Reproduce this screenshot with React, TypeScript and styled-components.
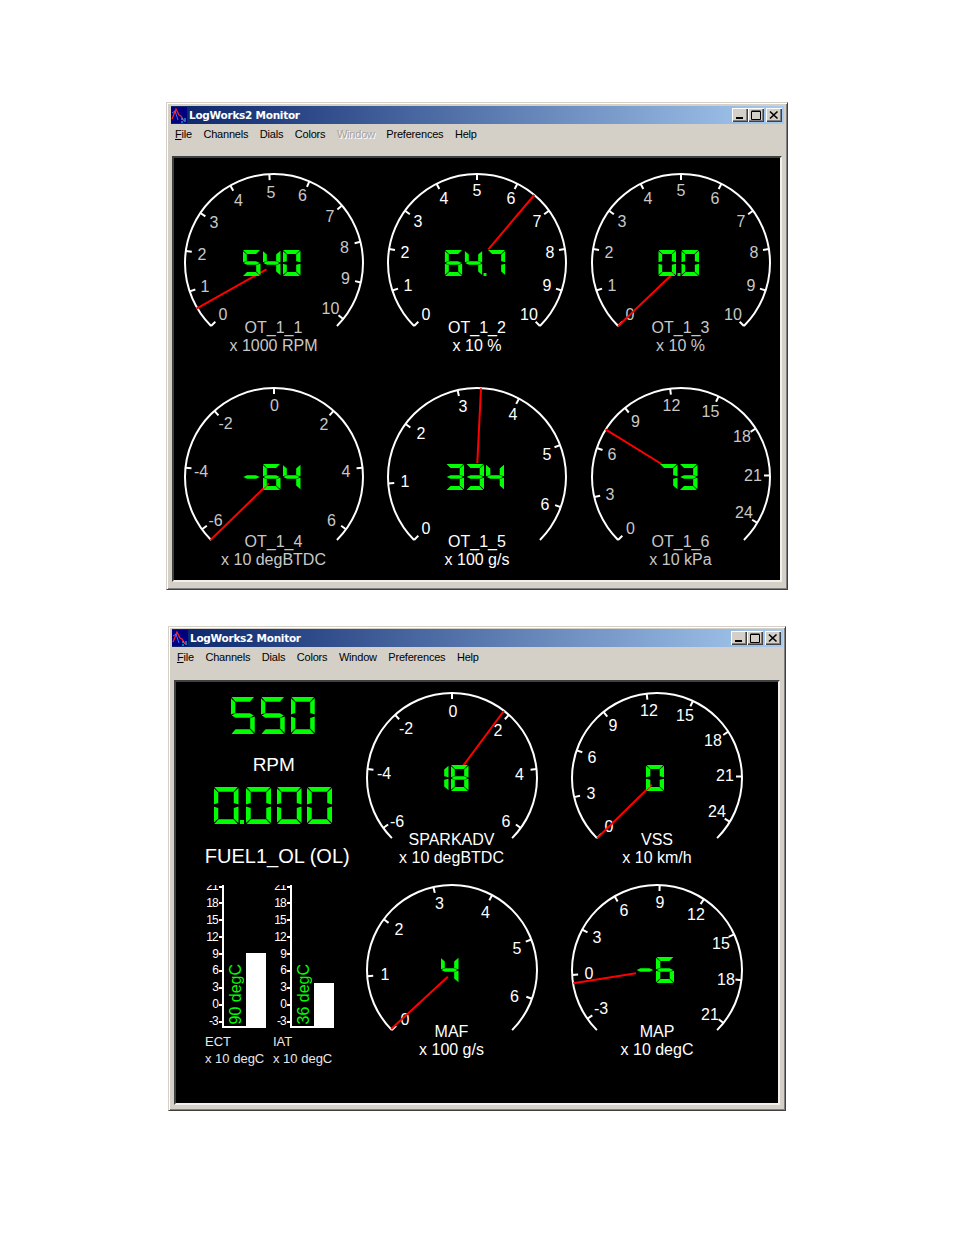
import styled, { createGlobalStyle } from "styled-components";

const GlobalStyle = createGlobalStyle`
  html, body {
    margin: 0;
    padding: 0;
    background: #fff;
  }
  body {
    font-family: "Liberation Sans", Arial, sans-serif;
  }
`;

type SegName = "a" | "b" | "c" | "d" | "e" | "f" | "g";

// segment outlines for a given stroke thickness (tx across, ty down, in %)
const segShape = (name: SegName, tx: number, ty: number) => {
  const rx = 100 - tx;
  const by = 100 - ty;
  switch (name) {
    case "a":
      return `3% 0, 97% 0, ${rx - 1}% ${ty}%, ${tx + 1}% ${ty}%`;
    case "b":
      return `100% 3%, 100% 47%, ${rx}% 43%, ${rx}% ${ty + 2}%`;
    case "c":
      return `100% 53%, 100% 97%, ${rx}% ${by - 2}%, ${rx}% 57%`;
    case "d":
      return `${tx + 1}% ${by}%, ${rx - 1}% ${by}%, 97% 100%, 3% 100%`;
    case "e":
      return `0 53%, ${tx}% 57%, ${tx}% ${by - 2}%, 0 97%`;
    case "f":
      return `0 3%, ${tx}% ${ty + 2}%, ${tx}% 43%, 0 47%`;
    default:
      return `4% 50%, ${tx + 1}% ${50 - ty / 2.2}%, ${rx - 1}% ${50 - ty / 2.2}%, 96% 50%, ${rx - 1}% ${50 + ty / 2.2}%, ${tx + 1}% ${50 + ty / 2.2}%`;
  }
};

const DIGIT_SEGS: Record<string, SegName[]> = {
  "0": ["a", "b", "c", "d", "e", "f"],
  "1": ["b", "c"],
  "3": ["a", "b", "c", "d", "g"],
  "4": ["b", "c", "f", "g"],
  "5": ["a", "c", "d", "f", "g"],
  "6": ["a", "c", "d", "e", "f", "g"],
  "7": ["a", "b", "c"],
  "8": ["a", "b", "c", "d", "e", "f", "g"],
  "-": ["g"],
};

const Page = styled.div`
  width: 954px;
  height: 1235px;
  padding-top: 102px;
  box-sizing: border-box;
  overflow: hidden;
`;

const Frame = styled.div<{ $left: number; $width: number; $height: number; $top: number; $pad: string }>`
  box-sizing: border-box;
  width: ${(p) => p.$width}px;
  height: ${(p) => p.$height}px;
  margin: ${(p) => p.$top}px 0 0 ${(p) => p.$left}px;
  padding: ${(p) => p.$pad};
  background: #d4d0c8;
  border: 1px solid;
  border-color: #d4d0c8 #404040 #404040 #d4d0c8;
  box-shadow: inset 1px 1px 0 #fff, inset -1px -1px 0 #808080;
`;

const TitleBar = styled.div`
  height: 18px;
  display: flex;
  align-items: center;
  padding-right: 2px;
  background: linear-gradient(90deg, #0a246a 0%, #a6caf0 100%);
`;

const TitleText = styled.span`
  flex: 1;
  margin-left: 2px;
  color: #fff;
  font-family: "DejaVu Sans", sans-serif;
  font-size: 10.5px;
  font-weight: 700;
  letter-spacing: -0.27px;
  white-space: nowrap;
`;

const WinButton = styled.button<{ $gapLeft?: number }>`
  box-sizing: border-box;
  width: 16px;
  height: 14px;
  margin-left: ${(p) => p.$gapLeft ?? 0}px;
  padding: 0;
  display: flex;
  align-items: center;
  justify-content: center;
  background: #d4d0c8;
  border: 0;
  box-shadow: inset 1px 1px 0 #fff, inset -1px -1px 0 #404040, inset -2px -2px 0 #808080;
`;

const MenuBar = styled.div<{ $pad: number }>`
  height: 20px;
  display: flex;
  align-items: center;
  gap: 11.5px;
  padding-left: ${(p) => p.$pad}px;
`;

const MenuItem = styled.span<{ $disabled?: boolean }>`
  font-size: 11px;
  letter-spacing: -0.2px;
  color: ${(p) => (p.$disabled ? "#a6a39c" : "#000")};
  text-shadow: ${(p) => (p.$disabled ? "1px 1px 0 #fff" : "none")};
  u {
    text-underline-offset: 1px;
  }
`;

const Panel = styled.div<{ $left: number; $top: number; $width: number; $height: number; $pad: number }>`
  box-sizing: border-box;
  width: ${(p) => p.$width}px;
  height: ${(p) => p.$height}px;
  margin: ${(p) => p.$top}px 0 0 ${(p) => p.$left}px;
  padding-left: ${(p) => p.$pad}px;
  background: #000;
  border: 2px solid;
  border-color: #404040 #f2f0ec #f2f0ec #404040;
  display: flex;
`;

const GaugeGrid = styled.div<{ $rowGap: number; $colGap: number; $cols: number }>`
  display: grid;
  grid-template-columns: repeat(${(p) => p.$cols}, 198px);
  column-gap: ${(p) => p.$colGap}px;
  row-gap: ${(p) => p.$rowGap}px;
  align-content: start;
`;

const Cell = styled.div<{ $h: number }>`
  position: relative;
  width: 198px;
  height: ${(p) => p.$h}px;
  display: grid;
  > * {
    grid-area: 1 / 1;
  }
`;

const DialSvg = styled.svg`
  display: block;
`;

const ArcLine = styled.path`
  fill: none;
  stroke: #fff;
  stroke-width: 2;
`;

const TickLine = styled.line`
  stroke: #fff;
  stroke-width: 2;
`;

const NeedleLine = styled.line`
  stroke: #f00;
  stroke-width: 2;
`;

const DialNumber = styled.text<{ $muted?: boolean }>`
  fill: ${(p) => (p.$muted ? "#c8c8c8" : "#fff")};
  font-size: 16px;
  font-family: "Liberation Sans", Arial, sans-serif;
  text-anchor: middle;
  dominant-baseline: central;
`;

const Caption = styled.div<{ $pad: number; $muted?: boolean }>`
  align-self: end;
  justify-self: center;
  padding-bottom: ${(p) => p.$pad}px;
  color: ${(p) => (p.$muted ? "#c8c8c8" : "#fff")};
  font-size: 16px;
  line-height: 18px;
  text-align: center;
  white-space: nowrap;
`;

const DialReadout = styled.div<{ $cy: number }>`
  position: absolute;
  left: calc(50% - 2px);
  top: ${(p) => p.$cy}px;
  transform: translate(-50%, -50%);
`;

const DigitRow = styled.div<{ $gap: number }>`
  position: relative;
  display: flex;
  gap: ${(p) => p.$gap}px;
`;

const Digit = styled.div<{ $w: number; $h: number; $extra: number }>`
  position: relative;
  width: ${(p) => p.$w}px;
  height: ${(p) => p.$h}px;
  margin-right: ${(p) => p.$extra}px;
  color: transparent;
  font-size: ${(p) => Math.round(p.$h * 0.7)}px;
  line-height: ${(p) => p.$h}px;
  text-align: center;
  white-space: nowrap;
`;

const Segment = styled.span<{ $name: SegName; $tx: number; $ty: number }>`
  position: absolute;
  inset: 0;
  background: #00ff00;
  clip-path: polygon(${(p) => segShape(p.$name, p.$tx, p.$ty)});
`;

const DecimalDot = styled.span<{ $size: number; $right: number }>`
  position: absolute;
  right: ${(p) => p.$right}px;
  bottom: 0;
  width: ${(p) => p.$size}px;
  height: ${(p) => p.$size}px;
  background: #00ff00;
`;

const LeftColumn = styled.div`
  box-sizing: border-box;
  flex: none;
  width: 176.5px;
  padding: 15px 0 0 17px;
  display: flex;
  flex-direction: column;
  align-items: center;
`;

const BigLabel = styled.div<{ $size: number; $top: number; $shift: number }>`
  margin-top: ${(p) => p.$top}px;
  margin-left: ${(p) => p.$shift}px;
  color: #fff;
  font-size: ${(p) => p.$size}px;
  line-height: 22px;
  white-space: nowrap;
`;

const LargeReadout = styled.div<{ $top: number }>`
  margin-top: ${(p) => p.$top}px;
`;

const ChartRow = styled.div`
  align-self: flex-start;
  margin: 18px 0 0 12px;
  display: flex;
`;

const Chart = styled.div`
  width: 68px;
`;

const ChartBody = styled.div`
  height: 143px;
  display: flex;
`;

const Scale = styled.div`
  width: 17px;
  height: 143px;
  overflow: hidden;
  flex: none;
`;

const ScaleList = styled.div`
  margin-top: -7px;
`;

const ScaleMark = styled.div`
  height: 16.9px;
  line-height: 16.9px;
  padding-right: 4px;
  position: relative;
  text-align: right;
  color: #fff;
  font-size: 12px;
  letter-spacing: -0.8px;
  &::after {
    content: "";
    position: absolute;
    right: 0;
    top: 7.5px;
    width: 3px;
    height: 2px;
    background: #fff;
  }
`;

const Plot = styled.div`
  box-sizing: border-box;
  width: 44px;
  height: 143px;
  padding-left: 1px;
  display: flex;
  align-items: flex-end;
  border-left: 2px solid #fff;
  border-bottom: 2px solid #fff;
`;

const VerticalValue = styled.div`
  width: 21px;
  flex: none;
  display: flex;
  justify-content: center;
  writing-mode: vertical-rl;
  transform: rotate(180deg);
  color: #00ff00;
  font-size: 16px;
  line-height: 21px;
  padding-top: 2px;
  white-space: nowrap;
`;

const BarFill = styled.div<{ $h: number }>`
  width: 20px;
  height: ${(p) => p.$h}px;
  background: #fff;
`;

const ChartCaption = styled.div`
  margin-top: 6px;
  color: #e8e8e8;
  font-size: 13px;
  line-height: 16.5px;
  white-space: nowrap;
`;

const polar = (r: number, deg: number) => {
  const rad = (deg * Math.PI) / 180;
  return { x: r * Math.cos(rad), y: -r * Math.sin(rad) };
};

const AppIcon = () => (
  <svg width="16" height="16" viewBox="0 0 16 16">
    <rect width="16" height="16" fill="#000080" />
    <path d="M1 12 L5 2 L8 8 L10 9 L13 14" fill="none" stroke="#ff2020" strokeWidth="1.3" />
    <path d="M1 6 L4 4 L7 13" fill="none" stroke="#4070ff" strokeWidth="1" />
    <path d="M10 12 h2 M10 15 h2 M14 11 v4" stroke="#20e0ff" strokeWidth="1" />
  </svg>
);

const WindowButtons = () => (
  <>
    <WinButton>
      <svg width="10" height="10" viewBox="0 0 10 10">
        <rect x="1" y="7" width="7" height="2" fill="#000" />
      </svg>
    </WinButton>
    <WinButton>
      <svg width="10" height="10" viewBox="0 0 10 10">
        <path d="M0.5 1.5 H9.5 V9.5 H0.5 Z M0.5 1 H9.5" fill="none" stroke="#000" />
      </svg>
    </WinButton>
    <WinButton $gapLeft={2}>
      <svg width="10" height="10" viewBox="0 0 10 10">
        <path d="M1 1.5 L8.5 8.5 M8.5 1.5 L1 8.5" fill="none" stroke="#000" strokeWidth="1.6" />
      </svg>
    </WinButton>
  </>
);

type Size = { w: number; h: number; gap: number; dot: number; extra: number; tx: number; ty: number };
const SMALL: Size = { w: 18, h: 26, gap: 2, dot: 3, extra: 3, tx: 24, ty: 15 };
const LARGE: Size = { w: 25, h: 37, gap: 5.5, dot: 4, extra: 2, tx: 19, ty: 13 };

const SevenSeg = ({ value, size }: { value: string; size: Size }) => {
  const chars = value.split("");
  return (
    <DigitRow $gap={size.gap}>
      {chars.map((ch, i) => {
        if (ch === ".") return null;
        const hasDot = chars[i + 1] === ".";
        return (
          <Digit key={i} $w={size.w} $h={size.h} $extra={hasDot ? size.extra : 0}>
            {hasDot ? `${ch}.` : ch}
            {(DIGIT_SEGS[ch] ?? []).map((s) => (
              <Segment key={s} $name={s} $tx={size.tx} $ty={size.ty} />
            ))}
            {hasDot && (
              <DecimalDot
                $size={size.dot}
                $right={-(size.gap + size.extra + size.dot) / 2}
              />
            )}
          </Digit>
        );
      })}
    </DigitRow>
  );
};

type Mark = [string, number, number];
type GaugeSpec = {
  r: number;
  start: number;
  step: number;
  marks: Mark[];
  needle: [number, number, number, number];
  readout: string;
  name: string;
  unit: string;
  muted?: boolean;
};

const Gauge = ({ spec, h, cy, capPad }: { spec: GaugeSpec; h: number; cy: number; capPad: number }) => {
  const from = polar(spec.r, 225);
  const to = polar(spec.r, -45);
  const [nx1, ny1, nx2, ny2] = spec.needle;
  return (
    <Cell $h={h}>
      <DialSvg width="198" height={h} viewBox={`-99 ${-cy} 198 ${h}`}>
        <ArcLine d={`M${from.x} ${from.y} A${spec.r} ${spec.r} 0 1 1 ${to.x} ${to.y}`} />
        {spec.marks.map((m, i) => {
          const deg = spec.start + spec.step * i;
          const a = polar(spec.r, deg);
          const b = polar(spec.r - 6, deg);
          return <TickLine key={m[0]} x1={a.x} y1={a.y} x2={b.x} y2={b.y} />;
        })}
        {spec.marks.map((m) => (
          <DialNumber key={m[0]} x={m[1]} y={m[2]} $muted={spec.muted}>
            {m[0]}
          </DialNumber>
        ))}
        <NeedleLine x1={nx1} y1={ny1} x2={nx2} y2={ny2} />
      </DialSvg>
      <Caption $pad={capPad} $muted={spec.muted}>
        {spec.name}
        <br />
        {spec.unit}
      </Caption>
      <DialReadout $cy={cy}>
        <SevenSeg value={spec.readout} size={SMALL} />
      </DialReadout>
    </Cell>
  );
};

const TEN_MARKS: Mark[] = [
  ["0", -51, 51], ["1", -69, 22], ["2", -72, -11], ["3", -59, -42], ["4", -33, -65], ["5", 0, -73],
  ["6", 34, -65], ["7", 60, -42], ["8", 73, -11], ["9", 70, 22], ["10", 52, 51],
];

const TOP_GAUGES: GaugeSpec[] = [
  {
    r: 89, start: 225, step: -26.4, muted: true,
    marks: [
      ["0", -51, 51], ["1", -69, 23], ["2", -72, -9], ["3", -60, -41], ["4", -35.5, -63], ["5", -3, -71],
      ["6", 28.5, -68], ["7", 56, -47], ["8", 70.5, -16], ["9", 71.5, 15], ["10", 56.5, 45],
    ],
    needle: [-7.5, 6.3, -77.5, 45.7], readout: "540", name: "OT_1_1", unit: "x 1000 RPM",
  },
  {
    r: 89, start: 225, step: -27, marks: TEN_MARKS,
    needle: [11.3, -13.7, 57.3, -68], readout: "64.7", name: "OT_1_2", unit: "x 10 %",
  },
  {
    r: 89, start: 225, step: -27, marks: TEN_MARKS, muted: true,
    needle: [-7.2, 9.7, -62.8, 63], readout: "0.0", name: "OT_1_3", unit: "x 10 %",
  },
  {
    r: 89, start: 216, step: -42, muted: true,
    marks: [
      ["-6", -58.5, 43.7], ["-4", -73, -6], ["-2", -48.5, -53.7], ["0", 0.5, -72], ["2", 50, -53], ["4", 72, -6], ["6", 57.5, 43.7],
    ],
    needle: [-5.2, 6.3, -63.5, 63], readout: "-64", name: "OT_1_4", unit: "x 10 degBTDC",
  },
  {
    r: 89, start: 225, step: -40.8,
    marks: [
      ["0", -51, 51], ["1", -72, 4], ["2", -56, -44], ["3", -14, -71], ["4", 36, -63], ["5", 70, -23], ["6", 68, 27],
    ],
    needle: [0.3, -13.7, 4, -88.7], readout: "334", name: "OT_1_5", unit: "x 100 g/s",
  },
  {
    r: 89, start: 225, step: -32, muted: true,
    marks: [
      ["0", -50.5, 51], ["3", -71, 17], ["6", -69, -23], ["9", -45.5, -56], ["12", -9.5, -72], ["15", 29.5, -66],
      ["18", 61, -41], ["21", 72, -2], ["24", 63, 35],
    ],
    needle: [-19.5, -13, -75.5, -47.7], readout: "73", name: "OT_1_6", unit: "x 10 kPa",
  },
];

const BOTTOM_GAUGES: GaugeSpec[] = [
  {
    r: 85, start: 216, step: -42,
    marks: [
      ["-6", -55, 43], ["-4", -68, -5], ["-2", -46, -50], ["0", 1, -67], ["2", 46, -48], ["4", 67.5, -4], ["6", 54, 43],
    ],
    needle: [11.2, -12.3, 51.8, -67], readout: "18", name: "SPARKADV", unit: "x 10 degBTDC",
  },
  {
    r: 85, start: 225, step: -32,
    marks: [
      ["0", -48, 48], ["3", -66, 15], ["6", -65, -21], ["9", -44, -53], ["12", -8, -68], ["15", 28, -63],
      ["18", 56, -38], ["21", 68, -3], ["24", 60, 33],
    ],
    needle: [-5.3, 6.7, -59.7, 60], readout: "0", name: "VSS", unit: "x 10 km/h",
  },
  {
    r: 85, start: 225, step: -40.8,
    marks: [
      ["0", -47, 49], ["1", -67, 4], ["2", -53, -41], ["3", -12.5, -67], ["4", 33.5, -58], ["5", 65, -22], ["6", 62.5, 26],
    ],
    needle: [-4.2, 6.7, -60.8, 59], readout: "4", name: "MAF", unit: "x 100 g/s",
  },
  {
    r: 85, start: 215, step: -31.7,
    marks: [
      ["-3", -56, 38], ["0", -68, 3], ["3", -60, -33], ["6", -33, -60], ["9", 3, -68], ["12", 39, -56],
      ["15", 64, -27], ["18", 69, 9], ["21", 53, 44],
    ],
    needle: [-21, 3.3, -83.7, 13.3], readout: "-6", name: "MAP", unit: "x 10 degC",
  },
];

const SCALE = ["21", "18", "15", "12", "9", "6", "3", "0", "-3"];

const BarChart = ({ name, value, height }: { name: string; value: string; height: number }) => (
  <Chart>
    <ChartBody>
      <Scale>
        <ScaleList>
          {SCALE.map((s) => (
            <ScaleMark key={s}>{s}</ScaleMark>
          ))}
        </ScaleList>
      </Scale>
      <Plot>
        <VerticalValue>{value}</VerticalValue>
        <BarFill $h={height} />
      </Plot>
    </ChartBody>
    <ChartCaption>
      {name}
      <br />x 10 degC
    </ChartCaption>
  </Chart>
);

const Menu = ({ windowDisabled, pad }: { windowDisabled?: boolean; pad: number }) => (
  <MenuBar $pad={pad}>
    <MenuItem>
      <u>F</u>ile
    </MenuItem>
    <MenuItem>Channels</MenuItem>
    <MenuItem>Dials</MenuItem>
    <MenuItem>Colors</MenuItem>
    <MenuItem $disabled={windowDisabled}>Window</MenuItem>
    <MenuItem>Preferences</MenuItem>
    <MenuItem>Help</MenuItem>
  </MenuBar>
);

const App = () => {
  return (
    <Page>
      <GlobalStyle />
      <Frame $left={166} $top={0} $width={622} $height={488} $pad="3px 3px 0 4px">
        <TitleBar>
          <AppIcon />
          <TitleText>LogWorks2 Monitor</TitleText>
          <WindowButtons />
        </TitleBar>
        <Menu windowDisabled pad={4} />
        <Panel $left={1} $top={12} $width={610} $height={426} $pad={0.5}>
          <GaugeGrid $cols={3} $colGap={5.5} $rowGap={8}>
            {TOP_GAUGES.map((g) => (
              <Gauge key={g.name} spec={g} h={206} cy={105} capPad={9} />
            ))}
          </GaugeGrid>
        </Panel>
      </Frame>
      <Frame $left={168} $top={36} $width={618} $height={485} $pad="2px 2px 0 3px">
        <TitleBar>
          <AppIcon />
          <TitleText>LogWorks2 Monitor</TitleText>
          <WindowButtons />
        </TitleBar>
        <Menu pad={5} />
        <Panel $left={2} $top={13} $width={606} $height={425} $pad={0}>
          <LeftColumn>
            <SevenSeg value="550" size={{ ...LARGE, w: 24, gap: 6 }} />
            <BigLabel $size={19} $top={20} $shift={2}>RPM</BigLabel>
            <LargeReadout $top={11}>
              <SevenSeg value="0.000" size={LARGE} />
            </LargeReadout>
            <BigLabel $size={20} $top={21} $shift={9}>FUEL1_OL (OL)</BigLabel>
            <ChartRow>
              <BarChart name="ECT" value="90 degC" height={73} />
              <BarChart name="IAT" value="36 degC" height={43} />
            </ChartRow>
          </LeftColumn>
          <GaugeGrid $cols={2} $colGap={7.5} $rowGap={6}>
            {BOTTOM_GAUGES.map((g) => (
              <Gauge key={g.name} spec={g} h={186} cy={96} capPad={1} />
            ))}
          </GaugeGrid>
        </Panel>
      </Frame>
    </Page>
  );
};

export default App;
